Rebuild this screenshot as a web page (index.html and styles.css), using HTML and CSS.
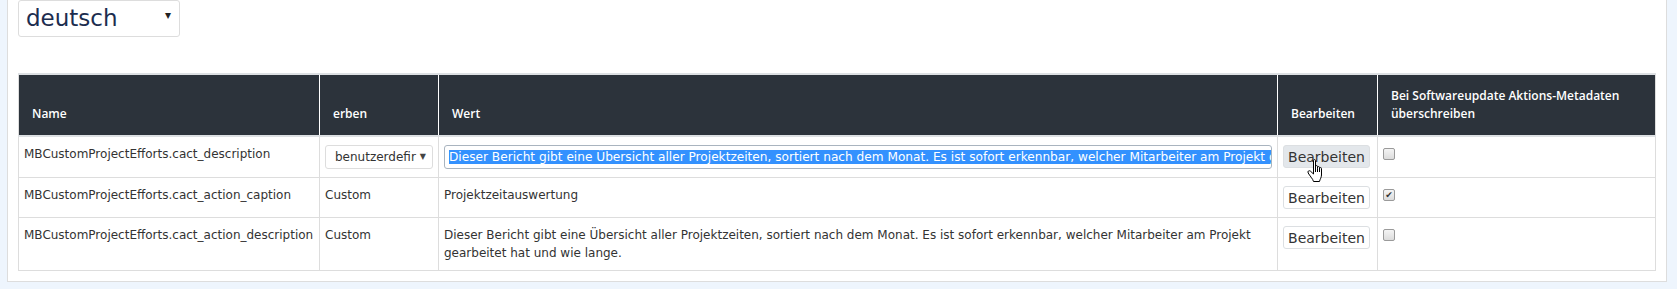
FILE: index.html
```html
<!DOCTYPE html>
<html>
<head>
<meta charset="utf-8">
<link rel="stylesheet" href="styles.css">
</head>
<body>

<!--Panel-->
<div class="panel">

<!--Language-->
<div class="langSelect">
  <span>deutsch</span>
  <span class="langArrow">&#9662;</span>
</div>

<!--Metadata table-->
<table class="metaTable">
  <colgroup>
    <col class="colName">
    <col class="colInherit">
    <col class="colValue">
    <col class="colEdit">
    <col class="colUpdate">
  </colgroup>
  <thead>
    <tr>
      <th>Name</th>
      <th>erben</th>
      <th>Wert</th>
      <th>Bearbeiten</th>
      <th>Bei Softwareupdate Aktions-Metadaten überschreiben</th>
    </tr>
  </thead>
  <tbody>
    <tr>
      <td>MBCustomProjectEfforts.cact_description</td>
      <td>
        <div class="inheritSelect">
          <span>benutzerdefir</span>
          <span class="smallArrow">&#9660;</span>
        </div>
      </td>
      <td>
        <div class="valueInput"><span class="selected">Dieser Bericht gibt eine Übersicht aller Projektzeiten, sortiert nach dem Monat. Es ist sofort erkennbar, welcher Mitarbeiter am Projekt gearbeitet hat und wie lange.</span></div>
      </td>
      <td>
        <div class="btnWrap">
          <button class="editBtn hover">Bearbeiten</button>
          <svg class="handCursor" width="18" height="24" viewBox="0 0 18 24">
            <path d="M6.5 1.5 C6.5 0.3 8.5 0.3 8.5 1.5 L8.5 9 L8.5 7.5 C8.5 6.3 10.5 6.3 10.5 7.5 L10.5 9.5 L10.5 8.5 C10.5 7.3 12.5 7.3 12.5 8.5 L12.5 10 L12.5 9.5 C12.5 8.3 14.5 8.3 14.5 9.5 L14.5 16 C14.5 18.5 13 20 12.5 22.5 L6.5 22.5 C6 20 2.5 16.5 1.2 14 C0.3 12.2 2 11 3.5 12.2 L6.5 15 Z" fill="#fff" stroke="#000" stroke-width="1"/>
            <path d="M8.5 9 L8.5 13 M10.5 9.5 L10.5 13 M12.5 10 L12.5 13" stroke="#000" stroke-width="1" fill="none"/>
          </svg>
        </div>
      </td>
      <td><span class="checkBox"></span></td>
    </tr>
    <tr>
      <td>MBCustomProjectEfforts.cact_action_caption</td>
      <td>Custom</td>
      <td>Projektzeitauswertung</td>
      <td><button class="editBtn">Bearbeiten</button></td>
      <td><span class="checkBox checked">&#10004;</span></td>
    </tr>
    <tr>
      <td>MBCustomProjectEfforts.cact_action_description</td>
      <td>Custom</td>
      <td>Dieser Bericht gibt eine Übersicht aller Projektzeiten, sortiert nach dem Monat. Es ist sofort erkennbar, welcher Mitarbeiter am Projekt gearbeitet hat und wie lange.</td>
      <td><button class="editBtn">Bearbeiten</button></td>
      <td><span class="checkBox"></span></td>
    </tr>
  </tbody>
</table>

</div>

</body>
</html>
```

FILE: styles.css
```css
body {
  margin: 0;
  background-color: #eef5fd;
  font-family: "DejaVu Sans", Verdana, sans-serif;
  font-size: 12px;
  color: #333;
}

/* White panel */
.panel {
  margin-left: 7px;
  margin-right: 10px;
  background-color: #fff;
  border: 1px solid #ddd;
  border-top: none;
  padding: 0 10px 10px 10px;
}

/* Language select */
.langSelect {
  display: flex;
  align-items: center;
  justify-content: space-between;
  box-sizing: border-box;
  width: 162px;
  height: 37px;
  padding: 0 8px 2px 7px;
  border: 1px solid #ddd;
  border-radius: 3px;
  color: #1c2d4f;
  font-size: 23px;
}

.langArrow {
  font-size: 12px;
  color: #222;
  margin-top: -6px;
}

/* Table */
.metaTable {
  margin-top: 36px;
  width: 100%;
  border-collapse: collapse;
  table-layout: fixed;
  border: 1px solid #ddd;
}

.colName { width: 301px; }
.colInherit { width: 119px; }
.colValue { width: 839px; }
.colEdit { width: 100px; }

.metaTable th {
  background-color: #2c333b;
  color: #fff;
  font-family: "Open Sans", "DejaVu Sans", sans-serif;
  font-size: 12px;
  font-weight: 600;
  text-align: left;
  vertical-align: bottom;
  line-height: 18px;
  height: 36px;
  padding: 12px 13px;
  border-left: 1px solid #fff;
  border-right: 1px solid #fff;
  border-top: 2px solid #dde0e3;
  border-bottom: 2px solid #dde0e3;
}

.metaTable th:first-child { border-left: 1px solid #ddd; }
.metaTable th:last-child { border-right: 1px solid #ddd; }

.metaTable td {
  vertical-align: top;
  line-height: 18px;
  padding: 8px 5px;
  border: 1px solid #ddd;
}

/* Inherit select */
.inheritSelect {
  display: flex;
  align-items: center;
  justify-content: space-between;
  box-sizing: border-box;
  height: 24px;
  padding: 0 6px 0 9px;
  border: 1px solid #ddd;
  border-radius: 3px;
  overflow: hidden;
  white-space: nowrap;
}

.smallArrow {
  font-size: 8px;
  color: #444;
}

/* Value input */
.valueInput {
  box-sizing: border-box;
  height: 24px;
  padding: 2px 4px;
  border: 1px solid #a9b4bf;
  border-radius: 3px;
  white-space: nowrap;
  overflow: hidden;
  font-size: 12.15px;
  line-height: 18px;
}

.selected {
  background-color: #3391fe;
  color: #fff;
}

/* Edit button */
.btnWrap {
  position: relative;
  width: 87px;
}

.editBtn {
  box-sizing: border-box;
  width: 87px;
  height: 23px;
  padding: 0;
  border: 1px solid #dcdfe2;
  border-radius: 3px;
  background-color: #fff;
  color: #333;
  font-family: "DejaVu Sans", Verdana, sans-serif;
  font-size: 14px;
  display: block;
}

.editBtn.hover {
  background-color: #e3e7eb;
}

.handCursor {
  position: absolute;
  left: 24px;
  top: 14px;
}

/* Checkbox */
.checkBox {
  display: block;
  box-sizing: border-box;
  width: 12px;
  height: 12px;
  margin-top: 3px;
  border: 1px solid #9a9a9a;
  border-radius: 2px;
  background: linear-gradient(#f4f4f4, #dcdcdc);
  font-size: 9px;
  line-height: 10px;
  text-align: center;
  color: #333;
}
```
